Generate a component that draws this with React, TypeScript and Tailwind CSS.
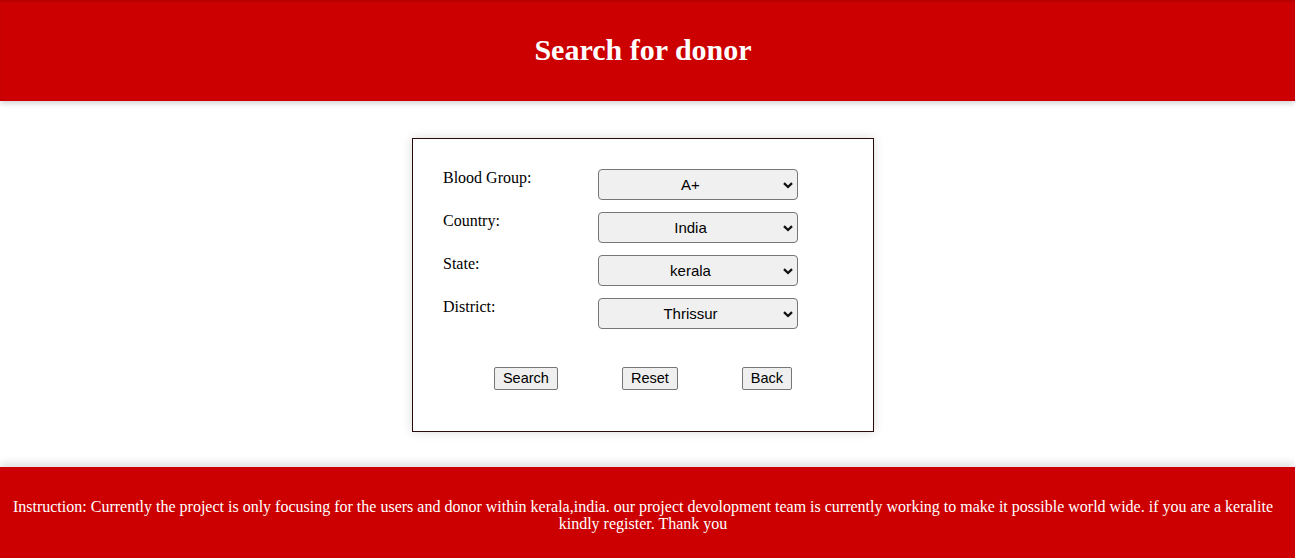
import { useState } from 'react'

const FIELDS = [
  { label: 'Blood Group:', options: ['A+', 'A-', 'B+', 'B-', 'O+', 'O-', 'AB+', 'AB-'] },
  { label: 'Country:', options: ['India'] },
  { label: 'State:', options: ['kerala'] },
  { label: 'District:', options: ['Thrissur', 'Ernakulam', 'Kozhikode', 'Palakkad'] },
]

function Chevron() {
  return (
    <svg
      viewBox="0 0 10 10"
      className="pointer-events-none absolute top-1/2 right-[5px] h-[10px] w-[10px] -translate-y-1/2"
    >
      <path d="M1 3.2 5 7 9 3.2" fill="none" stroke="#111" strokeWidth="2.3" />
    </svg>
  )
}

function SelectField({ options }: { options: string[] }) {
  const [value, setValue] = useState(options[0])
  return (
    <div className="relative h-[31px] w-[200px]">
      <select
        value={value}
        onChange={e => setValue(e.target.value)}
        className="h-full w-full appearance-none rounded-[4px] border border-[#767676] bg-[#f0f0f0] pt-[1px] pr-[19px] pl-[4px] text-center font-['Liberation_Sans',Arial,sans-serif] text-[15px] text-black"
      >
        {options.map(o => (
          <option key={o}>{o}</option>
        ))}
      </select>
      <Chevron />
    </div>
  )
}

function FormButton({ children }: { children: string }) {
  return (
    <button
      type="button"
      className="h-[23px] rounded-[2px] border border-[#767676] bg-[#efefef] px-[8px] font-['Liberation_Sans',Arial,sans-serif] text-[14.5px] leading-[21px] text-black"
    >
      {children}
    </button>
  )
}

function App() {
  return (
    <div className="min-h-screen bg-white font-['Liberation_Serif','Times_New_Roman',serif]">
      <header className="relative z-10 flex h-[101px] items-center justify-center bg-[#cc0000] pr-[9px] shadow-[inset_0_2px_2px_rgba(0,0,0,0.1),0_2px_6px_rgba(0,0,0,0.2)]">
        <h1 className="-mt-[2px] text-[30px] font-bold text-white">Search for donor</h1>
      </header>

      <main className="pt-[37px] pr-[9px] pb-[35px]">
        <div className="mx-auto w-[462px] border border-[#2b0a0a] bg-white pt-[30px] pb-[41px] shadow-[0_0_10px_rgba(0,0,0,0.15)]">
          <div className="ml-[30px] grid grid-cols-[155px_200px] gap-y-[12px]">
            {FIELDS.map(f => (
              <div key={f.label} className="contents">
                <label className="text-[16px] leading-[17px] text-black">{f.label}</label>
                <SelectField options={f.options} />
              </div>
            ))}
          </div>

          <div className="mt-[38px] flex justify-center gap-[64px]">
            <FormButton>Search</FormButton>
            <FormButton>Reset</FormButton>
            <FormButton>Back</FormButton>
          </div>
        </div>
      </main>

      <footer className="h-[91px] bg-[#cc0000] pt-[31px] pr-[13px] pl-[4px] text-center text-[16px] leading-[17px] text-white shadow-[0_-4px_8px_rgba(0,0,0,0.12)]">
        Instruction: Currently the project is only focusing for the users and donor within kerala,india. our project devolopment team is currently working to make it possible world wide. if you are a keralite kindly register. Thank you
      </footer>
    </div>
  )
}

export default App
